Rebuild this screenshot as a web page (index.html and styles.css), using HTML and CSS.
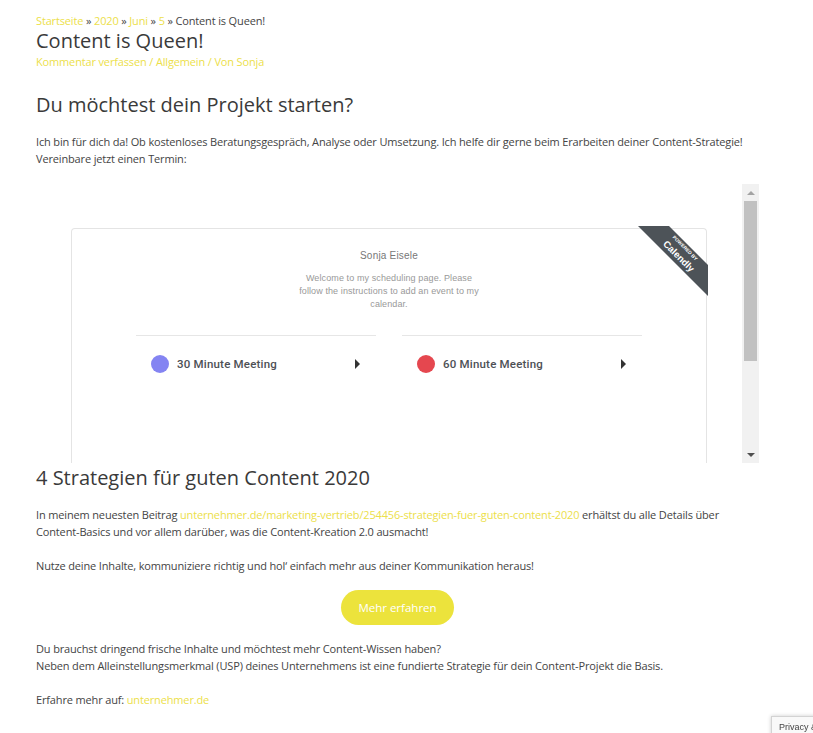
FILE: index.html
```html
<!DOCTYPE html>
<html lang="de">
<head>
  <meta charset="UTF-8">
  <title>Content is Queen!</title>
  <meta name="viewport" content="width=device-width, initial-scale=1.0">
  <link rel="stylesheet" href="styles.css">
</head>
<body>

<div class="page">
  <div class="breadcrumb">
    <a href="#">Startseite</a> » <a href="#">2020</a> » <a href="#">Juni</a> » <a href="#">5</a> » Content is Queen!
  </div>
  <h1 class="entry-title">Content is Queen!</h1>
  <div class="entry-meta">
    <a href="#">Kommentar verfassen</a> / <a href="#">Allgemein</a> / <a href="#">Von Sonja</a>
  </div>

  <h2>Du möchtest dein Projekt starten?</h2>
  <p>Ich bin für dich da! Ob kostenloses Beratungsgespräch, Analyse oder Umsetzung. Ich helfe dir gerne beim Erarbeiten deiner Content-Strategie!<br>
  Vereinbare jetzt einen Termin:</p>

  <div class="calendly-frame">
    <div class="frame-view">
      <div class="cal-card">
        <svg class="ribbon" width="70" height="70" viewBox="0 0 70 70">
          <polygon points="0,0 31,0 70,39 70,70" fill="#4d5358"/>
          <text x="47" y="22" transform="rotate(45 47 22)" text-anchor="middle" dominant-baseline="central" class="ribbon-small">POWERED BY</text>
          <text x="41" y="30" transform="rotate(45 41 30)" text-anchor="middle" dominant-baseline="central" class="ribbon-big">Calendly</text>
        </svg>
        <div class="cal-name">Sonja Eisele</div>
        <div class="cal-welcome">Welcome to my scheduling page. Please<br>follow the instructions to add an event to my<br>calendar.</div>
        <div class="cal-events">
          <div class="cal-event">
            <span class="dot purple"></span>
            <span class="event-name">30 Minute Meeting</span>
            <span class="arrow"></span>
          </div>
          <div class="cal-event">
            <span class="dot red"></span>
            <span class="event-name">60 Minute Meeting</span>
            <span class="arrow"></span>
          </div>
        </div>
      </div>
    </div>
    <div class="scrollbar">
      <span class="sb-up"></span>
      <div class="sb-track"><div class="sb-thumb"></div></div>
      <span class="sb-down"></span>
    </div>
  </div>

  <h2 class="h2-after">4 Strategien für guten Content 2020</h2>
  <p>In meinem neuesten Beitrag <a href="#">unternehmer.de/marketing-vertrieb/254456-strategien-fuer-guten-content-2020</a> erhältst du alle Details über<br>
  Content-Basics und vor allem darüber, was die Content-Kreation 2.0 ausmacht!</p>
  <p>Nutze deine Inhalte, kommuniziere richtig und hol‘ einfach mehr aus deiner Kommunikation heraus!</p>

  <div class="btn-row">
    <a href="#" class="btn-more">Mehr erfahren</a>
  </div>

  <p>Du brauchst dringend frische Inhalte und möchtest mehr Content-Wissen haben?<br>
  Neben dem Alleinstellungsmerkmal (USP) deines Unternehmens ist eine fundierte Strategie für dein Content-Projekt die Basis.</p>
  <p>Erfahre mehr auf: <a href="#">unternehmer.de</a></p>
</div>

<div class="privacy-badge">Privacy &amp;</div>

</body>
</html>
```

FILE: styles.css
```css
body { margin: 0; font-family: "Open Sans", Arial, sans-serif; background: #fff; color: #444; font-size: 11px; line-height: 17px; letter-spacing: -0.15px; }
a { color: #ece04a; text-decoration: none; }
.page { width: 723px; margin-left: 36px; padding-top: 12px; }
.breadcrumb { color: #444; }
.entry-title { font-size: 20px; line-height: 21px; font-weight: 400; color: #3a3a3a; margin: 1px 0 0; letter-spacing: 0; }
.entry-meta { margin-top: 2px; color: #ece04a; }
h2 { font-size: 20px; line-height: 22px; font-weight: 400; color: #3a3a3a; margin: 24px 0 0; letter-spacing: 0; }
h2.h2-after { margin-top: 4px; }
p { margin: 17px 0 0; white-space: nowrap; }

.calendly-frame { display: flex; height: 279px; margin-top: 17px; overflow: hidden; }
.frame-view { flex: 1; padding: 44px 35px 0; }
.cal-card {
  position: relative;
  border: 1px solid #e4e4e4;
  border-bottom: none;
  border-radius: 4px 4px 0 0;
  height: 300px;
  padding: 20px 64px 0;
  text-align: center;
  font-family: "Liberation Sans", Arial, sans-serif;
  letter-spacing: 0;
}
.ribbon { position: absolute; top: -3px; right: -2px; }
.ribbon-small { font-family: "Liberation Sans", Arial, sans-serif; font-size: 4.8px; font-weight: bold; fill: #fff; }
.ribbon-big { font-family: "Liberation Sans", Arial, sans-serif; font-size: 9.5px; font-weight: bold; fill: #fff; }
.cal-name { font-size: 10px; line-height: 14px; color: #777; letter-spacing: 0.2px; }
.cal-welcome { margin-top: 9px; font-size: 9px; line-height: 13px; color: #999; letter-spacing: 0.1px; white-space: nowrap; }
.cal-events { display: flex; gap: 26px; margin-top: 24px; }
.cal-event {
  flex: 1;
  display: flex;
  align-items: center;
  height: 56px;
  border-top: 1px solid #e6e6e6;
  padding: 0 16px 0 15px;
}
.dot { width: 18px; height: 18px; border-radius: 50%; margin-right: 8px; }
.dot.purple { background: #8484f2; }
.dot.red { background: #e5474f; }
.event-name { flex: 1; text-align: left; font-family: Roboto, "Liberation Sans", sans-serif; font-size: 11.5px; font-weight: 500; color: #4d5055; letter-spacing: 0.2px; }
.arrow { width: 0; height: 0; border-top: 5px solid transparent; border-bottom: 5px solid transparent; border-left: 5px solid #333; }

.scrollbar { width: 17px; display: flex; flex-direction: column; background: #f1f1f1; }
.sb-up, .sb-down { height: 17px; display: flex; align-items: center; justify-content: center; }
.sb-up::after { content: ""; border-left: 4px solid transparent; border-right: 4px solid transparent; border-bottom: 4px solid #a3a3a3; }
.sb-down::after { content: ""; border-left: 4px solid transparent; border-right: 4px solid transparent; border-top: 4px solid #505050; }
.sb-track { flex: 1; padding: 0 2px; }
.sb-thumb { height: 160px; background: #c1c1c1; }

.btn-row { text-align: center; margin: 16px 0 15px; }
.btn-row + p { margin-top: 0; }
.btn-more {
  display: inline-block;
  width: 113px;
  height: 35px;
  line-height: 35px;
  border-radius: 18px;
  background: #ece33c;
  color: #fff;
  font-size: 11.5px;
  letter-spacing: 0;
}

.privacy-badge {
  position: fixed;
  left: 771px;
  top: 716px;
  width: 80px;
  height: 30px;
  background: #f9f9f9;
  border: 1px solid #d3d3d3;
  box-shadow: 0 0 4px rgba(0,0,0,0.2);
  font-family: "Liberation Sans", Arial, sans-serif;
  font-size: 9px;
  line-height: 12px;
  letter-spacing: 0;
  color: #444;
  padding: 4px 0 0 7px;
  box-sizing: border-box;
  white-space: nowrap;
}
```
